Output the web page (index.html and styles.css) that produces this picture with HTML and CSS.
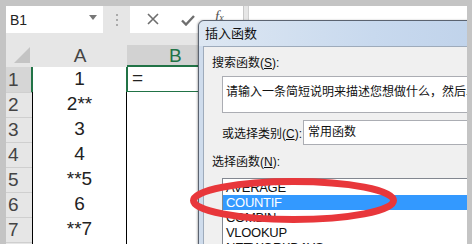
FILE: index.html
```html
<!DOCTYPE html>
<html>
<head>
<meta charset="utf-8">
<title>插入函数</title>
<link rel="stylesheet" href="styles.css">
</head>
<body>
<div class="screen">
 <div class="formula">
  <div class="namebox">
   <span>B1</span>
   <svg class="caret" width="8" height="5" viewBox="0 0 8 5"><path d="M0 0h8L4 5z" fill="#777"/></svg>
  </div>
  <div class="grip"><i></i><i></i><i></i></div>
  <div class="fxbox">
   <svg class="cancel" width="12" height="12" viewBox="0 0 12 12"><path d="M1 1l10 10M11 1L1 11" stroke="#6e6e6e" stroke-width="1.6"/></svg>
   <svg class="enter" width="14" height="11" viewBox="0 0 14 11"><path d="M1 5.5l4 4L13 1" stroke="#6e6e6e" stroke-width="2.4" fill="none"/></svg>
   <span class="fx">f<small>x</small></span>
  </div>
  <div class="input"></div>
 </div>

 <div class="heads">
  <div class="corner"><svg width="27" height="33" viewBox="0 0 27 33"><path d="M8 30L24 14V30z" fill="#c4c4c4"/></svg></div>
  <div class="colhead">A</div>
  <div class="colhead active">B</div>
 </div>

 <div class="row"><div class="rowhead active">1</div><div class="cell">1</div><div class="cell sel">=</div></div>
 <div class="row"><div class="rowhead">2</div><div class="cell">2**</div><div class="cell"></div></div>
 <div class="row"><div class="rowhead">3</div><div class="cell">3</div><div class="cell"></div></div>
 <div class="row"><div class="rowhead">4</div><div class="cell">4</div><div class="cell"></div></div>
 <div class="row"><div class="rowhead">5</div><div class="cell">**5</div><div class="cell"></div></div>
 <div class="row"><div class="rowhead">6</div><div class="cell">6</div><div class="cell"></div></div>
 <div class="row"><div class="rowhead">7</div><div class="cell">**7</div><div class="cell"></div></div>
 <div class="row"><div class="rowhead"></div><div class="cell"></div><div class="cell"></div></div>

 <div class="dialog">
  <div class="titlebar">插入函数</div>
  <div class="frame">
   <div class="client">
    <div class="lbl">搜索函数(<u>S</u>):</div>
    <div class="search">请输入一条简短说明来描述您想做什么，然后单</div>
    <div class="cat">
     <span class="catlbl">或选择类别(<u>C</u>):</span>
     <div class="select">常用函数</div>
    </div>
    <div class="lbl">选择函数(<u>N</u>):</div>
    <ul class="list">
     <li>AVERAGE</li>
     <li class="on">COUNTIF</li>
     <li>COMBIN</li>
     <li>VLOOKUP</li>
     <li>NETWORKDAYS</li>
    </ul>
   </div>
  </div>
 </div>

 <svg class="mark" width="230" height="60" viewBox="0 0 230 60"><ellipse cx="107.5" cy="24.5" rx="100" ry="19" fill="none" stroke="#e8373b" stroke-width="7"/></svg>
</div>
</body>
</html>
```

FILE: styles.css
```css
body {
 margin: 0;
 background: #c4c4c4;
 font-family: 'Liberation Sans', 'Noto Sans CJK SC', sans-serif;
}
.screen {
 position: relative;
 width: 461px;
 height: 238px;
 margin: 6px 0 0 6px;
 overflow: hidden;
 background: #e6e6e6;
}
.formula {
 display: flex;
 height: 27px;
}
.namebox {
 width: 97px;
 background: #fff;
 display: flex;
 align-items: center;
 justify-content: space-between;
 padding: 0 6px 0 4px;
 box-sizing: border-box;
 font-size: 14px;
 color: #222;
}
.caret {
 margin-top: -4px;
}
.grip {
 width: 27px;
 display: flex;
 flex-direction: column;
 align-items: center;
 justify-content: center;
 gap: 3px;
}
.grip i {
 width: 2px;
 height: 2px;
 background: #aaa;
}
.fxbox {
 width: 113px;
 background: #fff;
 border-right: 1px solid #c8c8c8;
 margin-right: 4px;
 position: relative;
}
.cancel {
 position: absolute;
 left: 17px;
 top: 7px;
}
.enter {
 position: absolute;
 left: 51px;
 top: 9px;
}
.fx {
 position: absolute;
 left: 85px;
 top: 2px;
 font-family: 'Liberation Serif', serif;
 font-style: italic;
 font-size: 15px;
 color: #555;
}
.fx small {
 font-size: 10px;
}
.input {
 flex: 1;
 background: #fff;
 border-left: 1px solid #d0d0d0;
}
.heads, .row {
 display: grid;
 grid-template-columns: 27px 94px 1fr;
}
.heads {
 height: 34px;
}
.corner {
 height: 33px;
}
.colhead {
 margin-top: 12px;
 height: 21px;
 line-height: 21px;
 text-align: center;
 font-size: 19px;
 color: #444;
}
.colhead.active {
 height: 20px;
 background: #d2d2d2;
 color: #217346;
 border-bottom: 2px solid #217346;
 text-align: left;
 padding-left: 42px;
}
.row {
 height: 25px;
 box-sizing: border-box;
}
.rowhead {
 font-size: 19px;
 line-height: 25px;
 color: #444;
 padding-left: 2px;
 border-right: 1px solid #000;
 border-bottom: 1px solid #cfcfcf;
}
.rowhead.active {
 background: #d6d6d6;
 border-right: 2px solid #217346;
}
.cell {
 background: #fff;
 font-size: 19px;
 line-height: 24px;
 text-align: center;
 color: #222;
 border-bottom: 1px solid #000;
 border-right: 1px solid #000;
}
.cell + .cell {
 border-color: #d4d4d4;
 text-align: left;
 padding-left: 6px;
}
.cell.sel {
 border: 2px solid #217346;
 border-top: 0;
 line-height: 22px;
 padding-left: 4px;
 margin-left: -1px;
}
.dialog {
 position: absolute;
 left: 192px;
 top: 14px;
 width: 290px;
 height: 240px;
 border: 1px solid #5b6370;
 border-radius: 6px 6px 0 0;
 background: #cfdcec;
 box-shadow: -1px 0 2px rgba(0, 0, 0, 0.25);
}
.titlebar {
 height: 25px;
 line-height: 25px;
 padding-left: 6px;
 font-size: 13px;
 color: #111;
 border-radius: 6px 6px 0 0;
 background: linear-gradient(to right, #dde7f2, #c8d9ee 60%, #bfd2ea);
}
.frame {
 padding-left: 4px;
}
.client {
 background: #f0f0f0;
 border: 1px solid #9eabbb;
 border-right: 0;
 height: 230px;
 padding: 8px 0 0 8px;
 font-size: 12px;
 color: #111;
}
.lbl {
 height: 16px;
 line-height: 16px;
}
.search {
 margin: 5px 0 0 10px;
 height: 37px;
 background: #fff;
 border: 1px solid #abadb3;
 border-right: 0;
 box-sizing: border-box;
 padding: 5px 0 0 3px;
 white-space: nowrap;
 overflow: hidden;
}
.cat {
 display: flex;
 align-items: center;
 margin: 7px 0 9px 10px;
 height: 25px;
}
.catlbl {
 width: 81px;
}
.select {
 flex: 1;
 height: 25px;
 line-height: 23px;
 box-sizing: border-box;
 background: #fff;
 border: 1px solid #abadb3;
 border-right: 0;
 padding-left: 4px;
}
.list {
 list-style: none;
 margin: 8px 0 0 10px;
 padding: 1px 0 0 0;
 background: #fff;
 border: 1px solid #828790;
 border-right: 0;
 font-size: 13px;
 letter-spacing: -0.3px;
}
.list li {
 height: 15px;
 line-height: 15px;
 padding-left: 3px;
}
.list li.on {
 background: #3399ff;
 color: #fff;
}
.mark {
 position: absolute;
 left: 180px;
 top: 170px;
}
```
